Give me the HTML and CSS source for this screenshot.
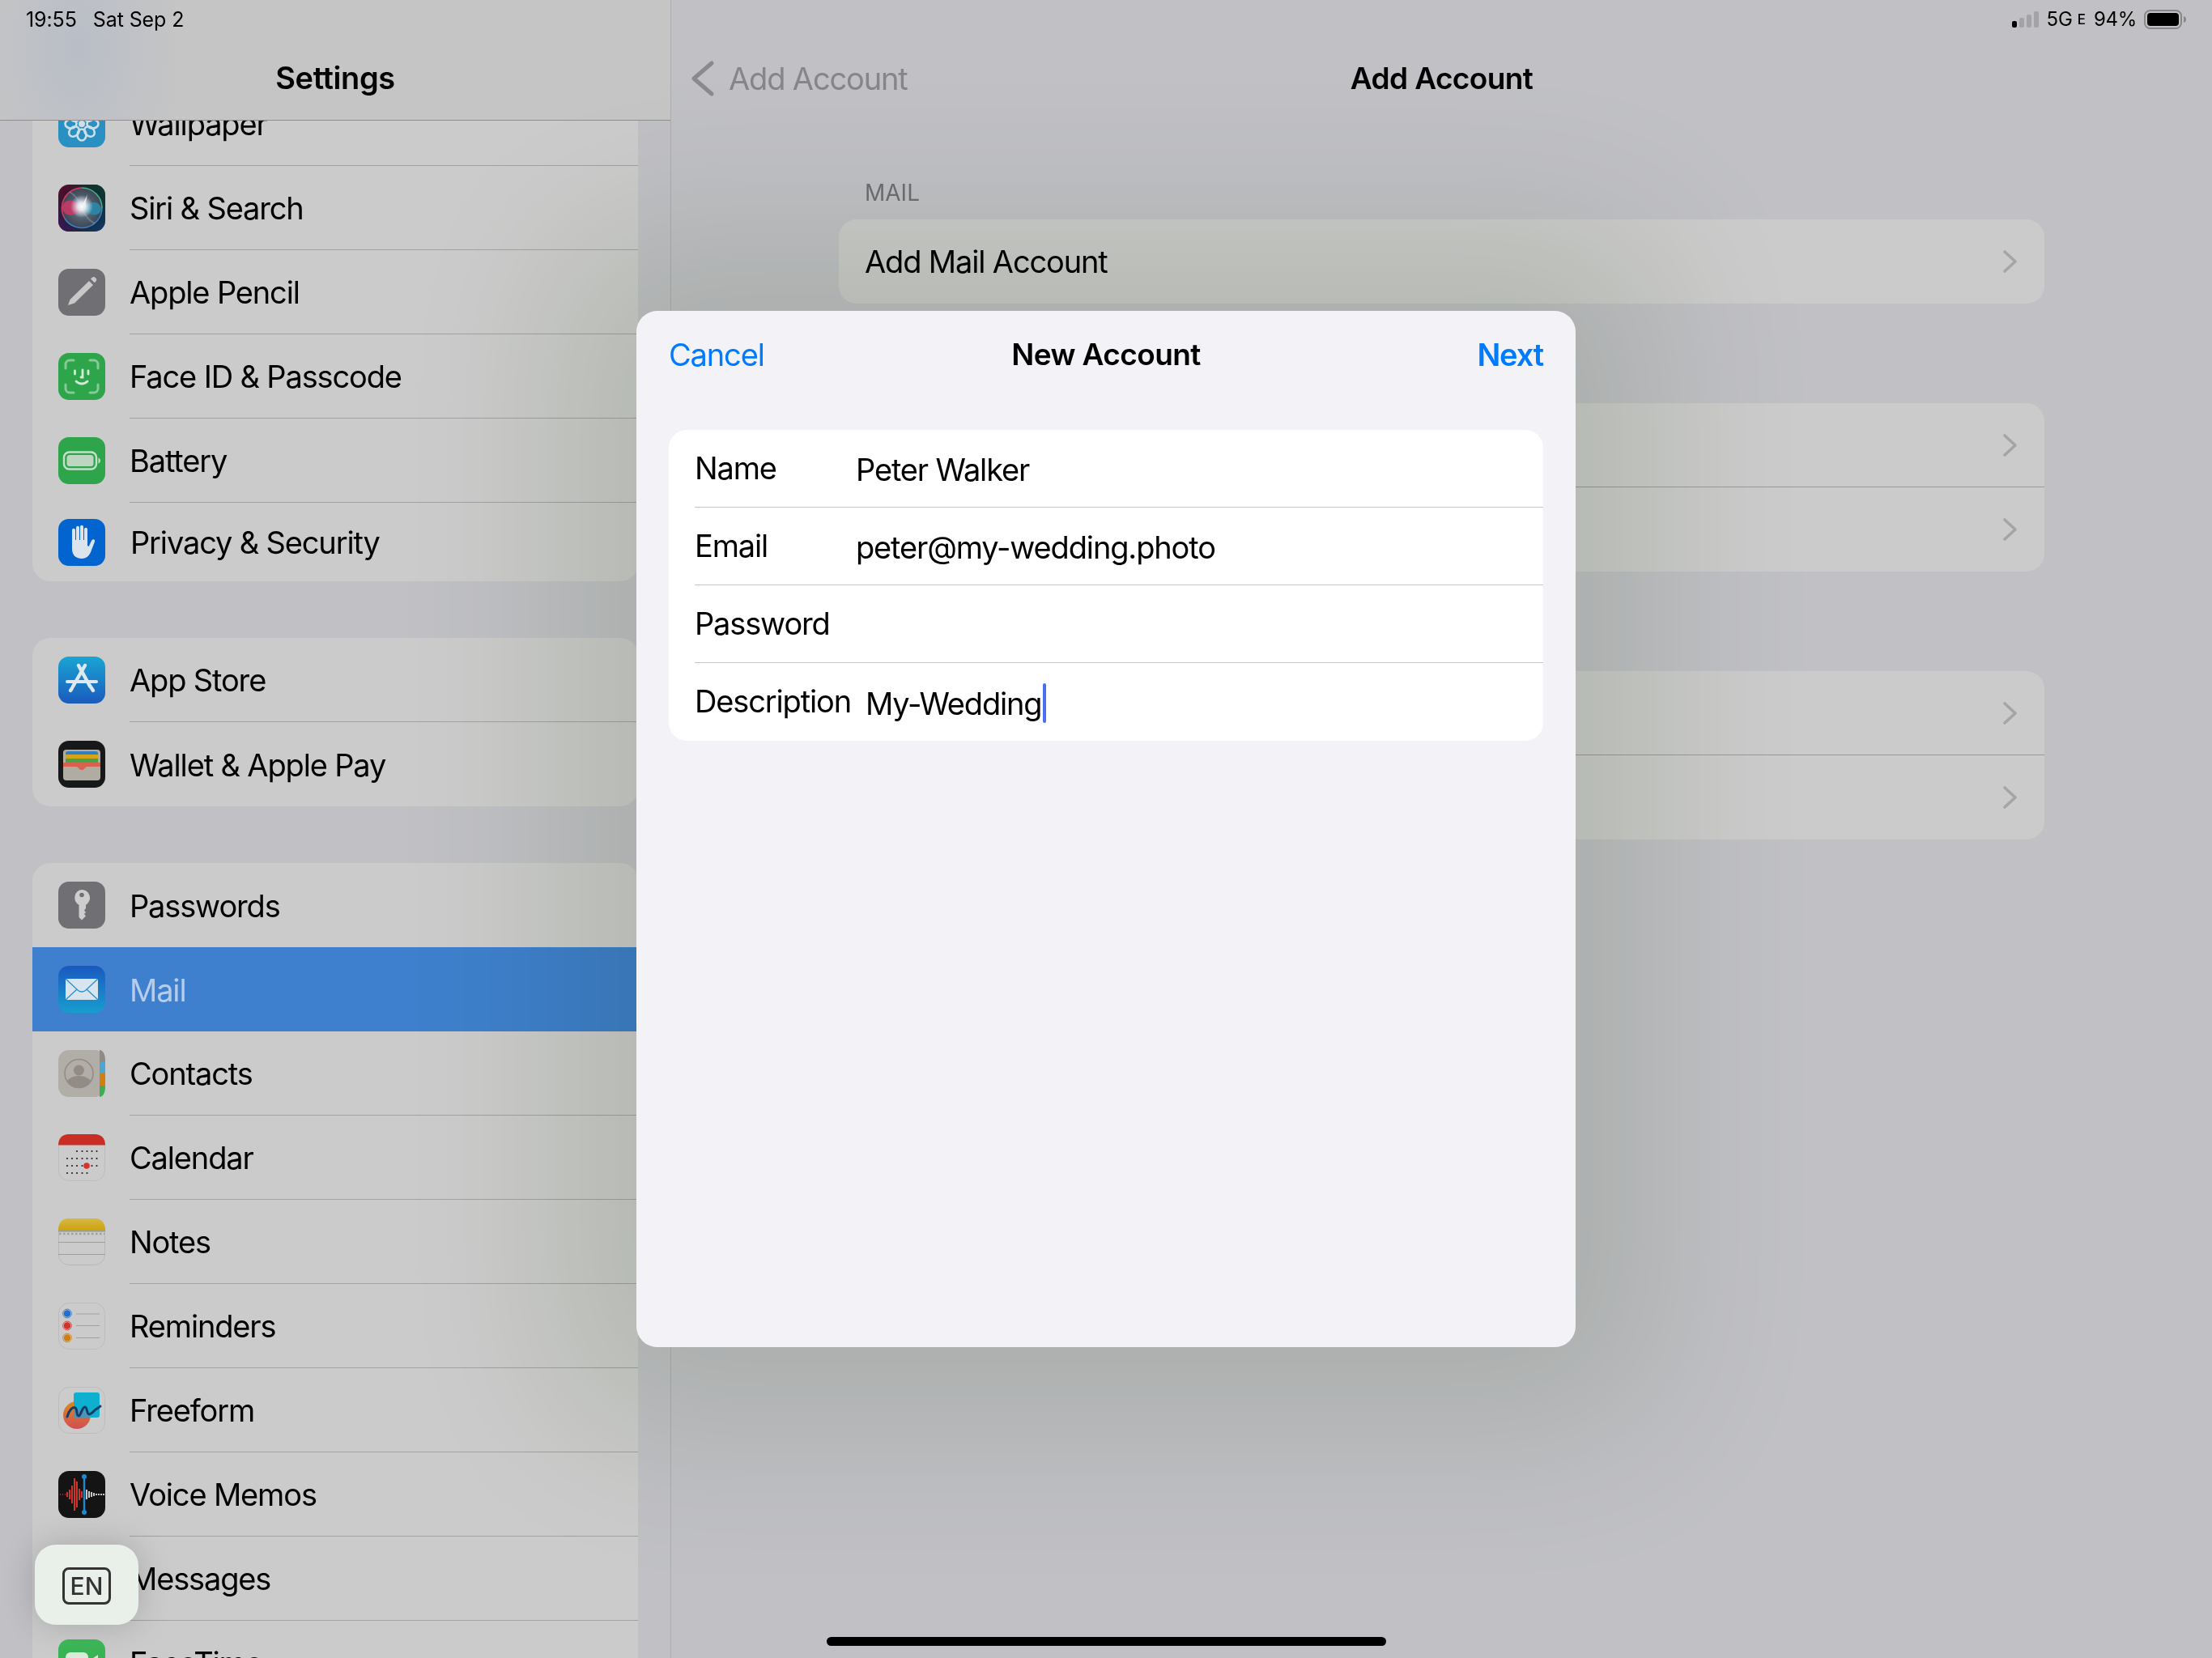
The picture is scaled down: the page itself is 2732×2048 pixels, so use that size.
FILE: index.html
```html
<!DOCTYPE html>
<html lang="en">
<head>
<meta charset="utf-8">
<title>Settings - Add Account</title>
<link rel="stylesheet" href="styles.css">
</head>
<body>
<svg class="defs" width="0" height="0" aria-hidden="true">
  <defs>
    <symbol id="chev" viewBox="0 0 20 30"><path d="M3 3l13 12L3 27" fill="none" stroke="#a5a5a6" stroke-width="3.6" stroke-linecap="round" stroke-linejoin="round"/></symbol>
    <linearGradient id="gStore" x1="0" y1="0" x2="0" y2="1"><stop offset="0" stop-color="#1aa5d3"/><stop offset="1" stop-color="#1a5abd"/></linearGradient>
    <linearGradient id="gMail" x1="0" y1="0" x2="0" y2="1"><stop offset="0" stop-color="#1a58c0"/><stop offset="1" stop-color="#169ecf"/></linearGradient>
    <linearGradient id="gNote" x1="0" y1="0" x2="0" y2="1"><stop offset="0" stop-color="#d6b846"/><stop offset="1" stop-color="#cba30a"/></linearGradient>
    <linearGradient id="gFree" x1="0" y1="0" x2="0" y2="1"><stop offset="0" stop-color="#d98a1e"/><stop offset="1" stop-color="#d14f55"/></linearGradient>
    <linearGradient id="gFace" x1="0" y1="0" x2="0" y2="1"><stop offset="0" stop-color="#3fba5b"/><stop offset="1" stop-color="#2ea548"/></linearGradient>
    <linearGradient id="gSiriL" x1="0" y1="0" x2="1" y2="1"><stop offset="0" stop-color="#5e0a30"/><stop offset=".5" stop-color="#1a1420"/><stop offset="1" stop-color="#0f3f70"/></linearGradient>
    <linearGradient id="gSiriR" x1="1" y1="0" x2="0" y2="1"><stop offset="0" stop-color="#0b3f35"/><stop offset=".5" stop-color="#0b3f35" stop-opacity="0"/><stop offset="1" stop-color="#4a1064"/></linearGradient>
    <radialGradient id="gSiriBall" cx=".5" cy=".5" r=".5"><stop offset="0" stop-color="#6d7f8f"/><stop offset="1" stop-color="#3c4452"/></radialGradient>
    <radialGradient id="gSiriC"><stop offset="0" stop-color="#ffffff"/><stop offset=".35" stop-color="#eef3f6" stop-opacity=".9"/><stop offset="1" stop-color="#eef3f6" stop-opacity="0"/></radialGradient>
  </defs>
</svg>

<div class="screen">
  <aside class="sidebar">
    <header class="side-head">
      <div class="status status-left"><span>19:55</span><span>Sat Sep 2</span></div>
      <h1 class="side-title">Settings</h1>
    </header>
    <div class="side-scroll">
      <div class="side-list">
        <section class="group">
          <div class="row">
            <svg class="icon" viewBox="0 0 58 58"><rect width="58" height="58" rx="13" fill="#2a8fc3"/><g fill="none" stroke="#cfdfe6" stroke-width="2.6"><ellipse cx="29" cy="15.500" rx="5.500" ry="7"/><ellipse cx="29" cy="42.500" rx="5.500" ry="7"/><ellipse cx="15.500" cy="29" rx="7" ry="5.500"/><ellipse cx="42.500" cy="29" rx="7" ry="5.500"/><ellipse cx="19.500" cy="19.500" rx="5.500" ry="7" transform="rotate(-45 19.500 19.500)"/><ellipse cx="38.500" cy="19.500" rx="5.500" ry="7" transform="rotate(45 38.500 19.500)"/><ellipse cx="19.500" cy="38.500" rx="5.500" ry="7" transform="rotate(45 19.500 38.500)"/><ellipse cx="38.500" cy="38.500" rx="5.500" ry="7" transform="rotate(-45 38.500 38.500)"/></g><circle cx="29" cy="29" r="4" fill="#cfdfe6"/></svg>
            <div class="label">Wallpaper</div>
          </div>
          <div class="row">
            <svg class="icon" viewBox="0 0 58 58"><rect width="58" height="58" rx="13" fill="url(#gSiriL)"/><rect width="58" height="58" rx="13" fill="url(#gSiriR)"/><circle cx="29" cy="29" r="25" fill="url(#gSiriBall)"/><path d="M29 4a25 25 0 0 1 25 25" fill="none" stroke="#3fb087" stroke-width="1.600"/><path d="M29 4A25 25 0 0 0 8 42" fill="none" stroke="#c93a5e" stroke-width="1.600"/><path d="M8 42a25 25 0 0 0 46-13" fill="none" stroke="#3c7fc0" stroke-width="1.600"/><path d="M5 28c1-10 14-12 25 1c-10 12-24 11-25-1z" fill="#c53a68" fill-opacity=".9"/><path d="M53 30c-1-10-14-11-24-1c10 11 23 11 24 1z" fill="#2b86a6" fill-opacity=".95"/><path d="M14 9c9 5 12 13 15 20c3 7 7 15 16 19" fill="none" stroke="#7a94b0" stroke-width="2" stroke-opacity=".55"/><circle cx="29" cy="27" r="14" fill="url(#gSiriC)"/><path d="M29 27l7-15-3 15z" fill="#f2f6f8" fill-opacity=".8"/></svg>
            <div class="label">Siri &amp; Search</div>
          </div>
          <div class="row">
            <svg class="icon" viewBox="0 0 58 58"><rect width="58" height="58" rx="13" fill="#6f6f74"/><path d="M12 45l2.500-7L38 15l5 5-23 22.500z" fill="#c8c8c8"/><path d="M40 12.500l1.800-1.800c1-1 2.600-1 3.700 0l1 1c1 1 1 2.700 0 3.700L44.700 17.200z" fill="#c8c8c8"/></svg>
            <div class="label">Apple Pencil</div>
          </div>
          <div class="row">
            <svg class="icon" viewBox="0 0 58 58"><rect width="58" height="58" rx="13" fill="#2ea54b"/><g fill="none" stroke="#86ca97" stroke-width="3" stroke-linecap="round"><path d="M9 19v-5a5 5 0 0 1 5-5h5"/><path d="M39 9h5a5 5 0 0 1 5 5v5"/><path d="M9 39v5a5 5 0 0 0 5 5h5"/><path d="M39 49h5a5 5 0 0 0 5-5v-5"/></g><g fill="none" stroke="#d2ead8" stroke-width="2.800" stroke-linecap="round"><path d="M20.500 22v4"/><path d="M37 22v4"/><path d="M30 21v9h-2"/><path d="M22 35c4 4 10 4 14 0"/></g></svg>
            <div class="label">Face ID &amp; Passcode</div>
          </div>
          <div class="row">
            <svg class="icon" viewBox="0 0 58 58"><rect width="58" height="58" rx="13" fill="#2ea54b"/><rect x="7" y="18.500" width="40" height="21" rx="6.500" fill="none" stroke="#c3e0ca" stroke-width="2.400"/><rect x="10.500" y="22" width="33" height="14" rx="3.500" fill="#bcd6c1"/><path d="M49.500 25.500c1.500.5 2.500 2 2.500 3.500s-1 3-2.500 3.500z" fill="#c3e0ca"/></svg>
            <div class="label">Battery</div>
          </div>
          <div class="row row-last">
            <svg class="icon" viewBox="0 0 58 58"><rect width="58" height="58" rx="13" fill="#0264cf"/><path d="M17 14c0-3 4-3 4 0v12h1V11c0-3 4-3 4 0v15h1V10c0-3 4-3 4 0v16h1V13c0-3 4-3 4 0v20l1.500 1 3.500-7c1.500-3 5-1.500 4 1l-5 13c-2 5-6 8-11 8c-8 0-12-5-12-12z" fill="#dbe3ec"/></svg>
            <div class="label label-nudge">Privacy &amp; Security</div>
          </div>
        </section>

        <section class="group">
          <div class="row">
            <svg class="icon" viewBox="0 0 58 58"><rect width="58" height="58" rx="13" fill="url(#gStore)"/><g fill="none" stroke="#dfe8f0" stroke-linecap="round"><path d="M25 11l14 25.500" stroke-width="4.400"/><path d="M33 11L18 37" stroke-width="4.400"/><path d="M11 31h36" stroke-width="4"/><path d="M39 36l4 6" stroke-width="4.400"/><path d="M15 42l2-3" stroke-width="4.400"/></g></svg>
            <div class="label">App Store</div>
          </div>
          <div class="row row-end">
            <svg class="icon" viewBox="0 0 58 58"><rect width="58" height="58" rx="13" fill="#17181a"/><rect x="6" y="11" width="46" height="38" rx="4" fill="#b0aca2"/><path d="M9 29v-13a3 3 0 0 1 3-3h34a3 3 0 0 1 3 3v13z" fill="#2f7fc1"/><rect x="9" y="17" width="40" height="6" fill="#d6a418"/><rect x="9" y="22" width="40" height="5" fill="#49a148"/><path d="M6 27h46v5H36c-2 0-3 1.500-4 3c-1.500 1.500-4.500 1.500-6 0c-1-1.500-2-3-4-3H6z" fill="#d9624f"/></svg>
            <div class="label">Wallet &amp; Apple Pay</div>
          </div>
        </section>

        <section class="group">
          <div class="row row-plain">
            <svg class="icon" viewBox="0 0 58 58"><rect width="58" height="58" rx="13" fill="#6f6f74"/><path d="M29 10a10 10 0 0 1 5 18.700V33l-2 2.500 2 2.500-2 2 2 2.500-5 5-3.500-3.500V28.700A10 10 0 0 1 29 10z" fill="#cdcdcd"/><circle cx="29" cy="16.500" r="2.800" fill="#6f6f74"/></svg>
            <div class="label">Passwords</div>
          </div>
          <div class="row row-selected">
            <svg class="icon" viewBox="0 0 58 58"><rect width="58" height="58" rx="13" fill="url(#gMail)"/><rect x="9" y="16" width="40" height="26" rx="1.500" fill="#d8e4ee"/><path d="M9 16l15.500 14.500c2.500 2 6.500 2 9 0L49 16M9 42l14-13M49 42L35 29" fill="none" stroke="#2a8fd0" stroke-width="1.300"/></svg>
            <div class="label">Mail</div>
          </div>
          <div class="row">
            <svg class="icon" viewBox="0 0 58 58"><rect width="58" height="58" rx="13" fill="#b0aea6"/><path d="M51 0h-6h6c4 0 7 5 7 13v2h-7z" fill="#8d8c85"/><rect x="51" y="15" width="7" height="14" fill="#4ba6d6"/><rect x="51" y="29" width="7" height="15" fill="#d27f0e"/><path d="M51 44h7v1c0 8-3 13-7 13z" fill="#3dae52"/><circle cx="25.500" cy="29" r="17.500" fill="#b0aea6" stroke="#928b86" stroke-width="1.500"/><circle cx="25.500" cy="25" r="6.500" fill="#928b86"/><path d="M11 38c3-4 9-6 14.500-6s11.500 2 14.500 6c-3 5-8.500 8-14.500 8s-11.500-3-14.500-8z" fill="#928b86"/></svg>
            <div class="label">Contacts</div>
          </div>
          <div class="row">
            <svg class="icon" viewBox="0 0 58 58"><rect x=".5" y=".5" width="57" height="57" rx="13" fill="#cbcbcb" stroke="#bcbcbc"/><path d="M0 13.500C0 5 5 0 13 0h32c8 0 13 5 13 13.500z" fill="#c92e26"/><g fill="#222"><circle cx="23" cy="21" r="1.100"/><circle cx="29.500" cy="21" r="1.100"/><circle cx="35.500" cy="21" r="1.100"/><circle cx="41.500" cy="21" r="1.100"/><circle cx="47.500" cy="21" r="1.100"/><circle cx="11" cy="30" r="1.100"/><circle cx="17" cy="30" r="1.100"/><circle cx="23" cy="30" r="1.100"/><circle cx="29.500" cy="30" r="1.100"/><circle cx="35.500" cy="30" r="1.100"/><circle cx="41.500" cy="30" r="1.100"/><circle cx="47.500" cy="30" r="1.100"/><circle cx="11" cy="39" r="1.100"/><circle cx="17" cy="39" r="1.100"/><circle cx="23" cy="39" r="1.100"/><circle cx="29.500" cy="39" r="1.100"/><circle cx="41.500" cy="39" r="1.100"/><circle cx="47.500" cy="39" r="1.100"/><circle cx="11" cy="48" r="1.100"/><circle cx="17" cy="48" r="1.100"/><circle cx="23" cy="48" r="1.100"/><circle cx="29.500" cy="48" r="1.100"/><circle cx="35.500" cy="48" r="1.100"/></g><circle cx="35" cy="39" r="3.800" fill="#d9342b"/></svg>
            <div class="label">Calendar</div>
          </div>
          <div class="row">
            <svg class="icon" viewBox="0 0 58 58"><rect x=".5" y=".5" width="57" height="57" rx="13" fill="#cbcbcb" stroke="#b7b7b7"/><path d="M0 15C0 5 5 0 13 0h32c8 0 13 5 13 15z" fill="url(#gNote)"/><rect y="15" width="58" height="1.500" fill="#9c9a90"/><path d="M1 19h56" stroke="#a0a0a0" stroke-width="2.500" stroke-dasharray="2.500 2.500"/><rect y="29" width="58" height="1" fill="#9e9e9e"/><rect y="44" width="58" height="1" fill="#9e9e9e"/></svg>
            <div class="label">Notes</div>
          </div>
          <div class="row">
            <svg class="icon" viewBox="0 0 58 58"><rect x=".5" y=".5" width="57" height="57" rx="13" fill="#cbcbcb" stroke="#bcbcbc"/><circle cx="11" cy="13.500" r="4.300" fill="#1f6fd0"/><circle cx="11" cy="13.500" r="5.400" fill="none" stroke="#1f6fd0" stroke-width=".8"/><circle cx="11" cy="28.500" r="4.300" fill="#d0322c"/><circle cx="11" cy="28.500" r="5.400" fill="none" stroke="#d0322c" stroke-width=".8"/><circle cx="11" cy="43.500" r="4.300" fill="#d07f0e"/><circle cx="11" cy="43.500" r="5.400" fill="none" stroke="#d07f0e" stroke-width=".8"/><path d="M22 14h29M22 28.500h29M22 43.500h29" stroke="#a0a0a0" stroke-width="1"/></svg>
            <div class="label">Reminders</div>
          </div>
          <div class="row">
            <svg class="icon" viewBox="0 0 58 58"><rect x=".5" y=".5" width="57" height="57" rx="13" fill="#cbcbcb" stroke="#bcbcbc"/><circle cx="23" cy="35" r="17" fill="url(#gFree)"/><path d="M19 10a3 3 0 0 1 3-3h26a3 3 0 0 1 3 3v25a3 3 0 0 1-3 3H22a3 3 0 0 1-3-3z" fill="#0fb0cf"/><path d="M19 28a17 17 0 0 1 21 10H22a3 3 0 0 1-3-3z" fill="#4f93bc"/><path d="M11 37c2-8 7-13 10-11c3 2 1 10 4 10c3 0 4-11 8-11c3 0 2 9 5 9c3 0 5-3 8-6c2-1 3-2 6-4" fill="none" stroke="#153c63" stroke-width="3" stroke-linecap="round"/></svg>
            <div class="label">Freeform</div>
          </div>
          <div class="row">
            <svg class="icon" viewBox="0 0 58 58"><rect width="58" height="58" rx="13" fill="#141414"/><path d="M2 29h1M5 29h1M8 29h1" stroke="#d0352c" stroke-width="1.500"/><path d="M11 26v6M14 23v12M17 18v22M20 9v40M23 13v32M26 22v14M29 25v8" stroke="#d0352c" stroke-width="2"/><path d="M35 23v12M38 25v8M41 26v6M44 27v4M47 28v2M50 28v2M53 28v2M56 28v2" stroke="#c9c9c9" stroke-width="2"/><path d="M32 7v44" stroke="#1c8ad0" stroke-width="2.400"/><circle cx="32" cy="7" r="3" fill="#1c8ad0"/><circle cx="32" cy="51" r="3" fill="#1c8ad0"/></svg>
            <div class="label">Voice Memos</div>
          </div>
          <div class="row">
            <svg class="icon" viewBox="0 0 58 58"><rect width="58" height="58" rx="13" fill="url(#gFace)"/><ellipse cx="29" cy="28" rx="20" ry="16" fill="#d9ecdc"/></svg>
            <div class="label">Messages</div>
          </div>
          <div class="row">
            <svg class="icon" viewBox="0 0 58 58"><rect width="58" height="58" rx="13" fill="url(#gFace)"/><rect x="9" y="16" width="28" height="26" rx="6" fill="#d9ecdc"/><path d="M39 26l10-7v20l-10-7z" fill="#d9ecdc"/></svg>
            <div class="label">FaceTime</div>
          </div>
        </section>
      </div>
    </div>
  </aside>

  <main class="detail">
    <div class="status status-right">
      <svg class="signal" width="34" height="22" viewBox="0 0 34 22"><rect x="0" y="13" width="6" height="8" rx="2" fill="#000"/><rect x="9" y="9" width="6" height="12" rx="2" fill="#a3a3a7"/><rect x="18" y="5" width="6" height="16" rx="2" fill="#a3a3a7"/><rect x="27" y="1" width="6" height="20" rx="2" fill="#a3a3a7"/></svg>
      <span class="net">5G</span><span class="net-e">E</span><span class="pct">94%</span>
      <svg class="batt" width="54" height="24" viewBox="0 0 54 24"><rect x="1" y="1" width="45" height="22" rx="6.500" fill="none" stroke="#88888b" stroke-width="2"/><rect x="4" y="4" width="39" height="16" rx="4" fill="#000"/><path d="M49 8c2 .5 3 2 3 4s-1 3.500-3 4z" fill="#88888b"/></svg>
    </div>
    <nav class="nav">
      <div class="back">
        <svg width="32" height="46" viewBox="0 0 32 46"><path d="M28 4L6 23l22 19" fill="none" stroke="#8a8a8d" stroke-width="5" stroke-linecap="round" stroke-linejoin="round"/></svg>
        <span>Add Account</span>
      </div>
      <h2 class="nav-title">Add Account</h2>
    </nav>
    <div class="detail-body">
      <div class="sec-label">MAIL</div>
      <section class="dgroup">
        <div class="drow"><span>Add Mail Account</span><svg class="chev" width="20" height="30"><use href="#chev"/></svg></div>
      </section>
      <section class="dgroup dgroup-mid">
        <div class="drow drow-sep"><svg class="chev" width="20" height="30"><use href="#chev"/></svg></div>
        <div class="drow"><svg class="chev" width="20" height="30"><use href="#chev"/></svg></div>
      </section>
      <section class="dgroup dgroup-low">
        <div class="drow drow-sep"><svg class="chev" width="20" height="30"><use href="#chev"/></svg></div>
        <div class="drow"><svg class="chev" width="20" height="30"><use href="#chev"/></svg></div>
      </section>
    </div>
    <div class="home-bar"></div>
  </main>

  <div class="modal-shadow"></div>
  <div class="modal">
    <div class="modal-head">
      <span class="link">Cancel</span>
      <span class="modal-title">New Account</span>
      <span class="link link-strong">Next</span>
    </div>
    <div class="form">
      <div class="field"><span class="f-label">Name</span><span class="f-value">Peter Walker</span></div>
      <div class="field"><span class="f-label">Email</span><span class="f-value">peter@my-wedding.photo</span></div>
      <div class="field"><span class="f-label">Password</span></div>
      <div class="field"><span class="f-label">Description</span><span class="f-value">My-Wedding<i class="caret"></i></span></div>
    </div>
  </div>

  <div class="kbd-badge"><span class="kbd-en">EN</span></div>
</div>
</body>
</html>
```

FILE: styles.css
```css
* { box-sizing: border-box; }
html, body { margin: 0; padding: 0; }
body {
  width: 2732px;
  height: 2048px;
  overflow: hidden;
  font-family: Inter, "Liberation Sans", sans-serif;
  color: #000;
  background: #c0c0c5;
}
.defs { position: absolute; }
.screen { position: relative; display: flex; width: 2732px; height: 2048px; overflow: hidden; }

.sidebar {
  width: 829px;
  height: 100%;
  display: flex;
  flex-direction: column;
  border-right: 1px solid #adadb0;
  background: #c0c0c5;
}
.side-head {
  flex: none;
  height: 149px;
  border-bottom: 1px solid #8f8f8f;
  background: radial-gradient(ellipse 130px 200px at 95px 60px, #b9bec6 0%, #c0c2c6 60%, rgba(197,197,197,0) 100%), #c5c5c5;
  position: relative;
  z-index: 1;
}
.status { font-size: 25px; font-weight: 400; letter-spacing: -0.1px; }
.status-left { display: flex; gap: 20px; padding: 10px 0 0 32px; height: 48px; line-height: 28px; }
.side-title {
  margin: 0;
  padding-top: 26px;
  text-align: center;
  font-size: 38px;
  line-height: 44px;
  font-weight: 600;
  letter-spacing: -0.4px;
}
.side-scroll { flex: 1; overflow: hidden; }
.side-list { margin-top: -48px; padding: 0 40px; display: flex; flex-direction: column; gap: 70px; }
.group { background: #cbcbcb; border-radius: 22px; overflow: hidden; }
.row { display: flex; align-items: center; height: 104px; padding-left: 32px; }
.row-last { height: 97px; }
.icon { flex: none; width: 58px; height: 58px; display: block; }
.label {
  flex: 1;
  align-self: stretch;
  margin-left: 30px;
  padding-top: 1px;
  display: flex;
  align-items: center;
  font-size: 38px;
  letter-spacing: -1.15px;
  border-bottom: 1px solid #a1a1a1;
}
.row-last .label, .row-end .label, .row-plain .label { border-bottom: 0; }
.row-selected { background: #3e80cd; }
.row-selected .label { color: #b5cdea; border-bottom: 0; }
.label-nudge { padding-left: 1px; }

.detail { flex: 1; position: relative; display: flex; flex-direction: column; }
.status-right {
  display: flex;
  align-items: center;
  justify-content: flex-end;
  height: 48px;
  padding: 0 30px 0 0;
  line-height: 28px;
  font-size: 24px;
}
.signal { margin-right: 8px; }
.net { margin-right: 6px; }
.net-e { font-size: 17px; font-weight: 500; margin-right: 10px; }
.pct { margin-right: 9px; letter-spacing: -0.3px; }
.nav { position: relative; height: 101px; display: flex; align-items: flex-start; justify-content: center; }
.nav-title { margin: 0; padding-top: 26px; font-size: 37px; line-height: 46px; font-weight: 600; letter-spacing: -0.6px; }
.back {
  position: absolute;
  left: 22px;
  top: 26px;
  display: flex;
  align-items: center;
  gap: 17px;
  height: 46px;
  font-size: 38px;
  letter-spacing: -1.15px;
  color: #85858a;
}
.detail-body { padding: 0 207px; }
.sec-label { height: 122px; font-size: 28px; line-height: 34px; padding: 72px 0 0 32px; color: #6d6d72; }
.dgroup { background: #cbcbcb; border-radius: 22px; overflow: hidden; }
.dgroup-mid { margin-top: 123px; }
.dgroup-low { margin-top: 123px; }
.drow {
  height: 104px;
  display: flex;
  align-items: center;
  justify-content: flex-end;
  padding: 0 32px;
  font-size: 38px;
  letter-spacing: -1.15px;
}
.drow span { margin-right: auto; }
.drow-sep { border-bottom: 1px solid #999; }
.home-bar {
  position: absolute;
  left: 192px;
  top: 2022px;
  width: 691px;
  height: 11px;
  border-radius: 6px;
  background: #000;
}

.modal-shadow {
  position: absolute;
  left: 786px;
  top: 384px;
  width: 1160px;
  height: 1280px;
  border-radius: 26px;
  box-shadow: 0 0 200px 100px rgb(227, 232, 223);
  mix-blend-mode: multiply;
  z-index: 2;
}
.modal {
  position: absolute;
  left: 786px;
  top: 384px;
  width: 1160px;
  height: 1280px;
  background: #f2f2f7;
  border-radius: 26px;
  z-index: 2;
}
.modal-head {
  height: 108px;
  padding: 30px 40px 0;
  display: flex;
  justify-content: space-between;
  align-items: flex-start;
  position: relative;
  font-size: 38px;
  line-height: 48px;
  letter-spacing: -1.15px;
}
.link { color: #007aff; }
.link-strong { font-weight: 600; }
.modal-title { position: absolute; left: 0; right: 0; text-align: center; font-weight: 600; letter-spacing: -0.6px; font-size: 37px; }
.form { margin: 39px 40px 0; background: #fff; border-radius: 22px; overflow: hidden; }
.field {
  height: 96px;
  margin-left: 32px;
  display: flex;
  align-items: center;
  font-size: 38px;
  letter-spacing: -1.15px;
  border-bottom: 1px solid #c6c6c8;
}
.field:last-child { border-bottom: 0; }
.f-label { min-width: 181px; margin-right: 18px; padding-bottom: 2px; }
.f-value { padding-top: 3px; display: inline-flex; align-items: center; }
.caret { display: inline-block; width: 4px; height: 49px; margin-left: 1px; border-radius: 2px; background: #4c6ef0; }

.kbd-badge {
  position: absolute;
  left: 43px;
  top: 1908px;
  width: 128px;
  height: 99px;
  display: flex;
  align-items: center;
  justify-content: center;
  background: #e9f0ea;
  border-radius: 26px;
  box-shadow: 0 0 40px rgba(0, 0, 0, 0.18);
  z-index: 3;
}
.kbd-en {
  width: 60px;
  height: 46px;
  margin-top: 2px;
  display: flex;
  align-items: center;
  justify-content: center;
  border: 3px solid #333;
  border-radius: 8px;
  font-size: 30px;
  font-weight: 500;
  color: #333;
}
```
